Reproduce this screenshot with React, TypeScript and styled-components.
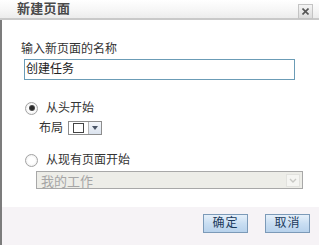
import React from 'react'
import styled, { createGlobalStyle } from 'styled-components'

const Global = createGlobalStyle`
  html, body {
    margin: 0;
    padding: 0;
    background: #fff;
  }
  body {
    font-family: "Liberation Sans", "Noto Sans CJK SC", sans-serif;
    font-size: 12px;
    color: #333;
  }
`

const Dialog = styled.div`
  width: 319px;
  height: 245px;
  display: flex;
  flex-direction: column;
  overflow: hidden;
`
const TitleBar = styled.div`
  height: 18px;
  flex: none;
  display: flex;
  align-items: center;
  justify-content: space-between;
  padding: 0 6px 0 17px;
  background: linear-gradient(#ffffff, #f6f6f6 55%, #ececec);
  border-bottom: 2px solid #c9c9c9;
`
const Title = styled.div`
  font-size: 13px;
  font-weight: bold;
  color: #4a4a4a;
  letter-spacing: 0.3px;
  line-height: 14px;
`
const Close = styled.div`
  width: 13px;
  height: 13px;
  margin-top: 4px;
  border: 1px solid #c4c4c4;
  background: linear-gradient(#f4f4f4, #dcdcdc);
  display: flex;
  align-items: center;
  justify-content: center;
`
const Body = styled.div`
  flex: 1;
  border-left: 2px solid #7c7c7c;
  padding: 22px 0 0 19px;
  display: flex;
  flex-direction: column;
  align-items: flex-start;
`
const Label = styled.div`
  line-height: 14px;
  color: #333;
`
const Input = styled.div`
  margin: 3px 0 0 3px;
  width: 268px;
  height: 19px;
  border: 1px solid #6b9cb6;
  line-height: 19px;
  padding-left: 1px;
  box-sizing: content-box;
  color: #222;
`
const RadioRow = styled.div<{ $top: number }>`
  margin-top: ${p => p.$top}px;
  margin-left: 4px;
  display: flex;
  align-items: center;
  height: 14px;
  line-height: 14px;
`
const Radio = styled.span<{ $on?: boolean }>`
  width: 11px;
  height: 11px;
  border-radius: 50%;
  border: 1px solid #a3a3a3;
  background: radial-gradient(circle, #ffffff 40%, #e6e6e6);
  margin-right: 8px;
  position: relative;
  &::after {
    content: '';
    display: ${p => (p.$on ? 'block' : 'none')};
    position: absolute;
    left: 2.5px;
    top: 2.5px;
    width: 6px;
    height: 6px;
    border-radius: 50%;
    background: radial-gradient(circle, #2a2a2a 35%, #777 100%);
  }
`
const SubRow = styled.div`
  margin: 6px 0 0 18px;
  display: flex;
  align-items: center;
  line-height: 14px;
`
const LayoutPick = styled.div`
  margin-left: 5px;
  display: flex;
  height: 12px;
  border: 1px solid #8d8d8d;
  background: #fff;
`
const LayoutIcon = styled.span`
  width: 19px;
  display: flex;
  align-items: center;
  justify-content: center;
  border-right: 1px solid #b5b5b5;
  &::before {
    content: '';
    width: 11px;
    height: 10px;
    border: 1px solid #444;
    box-sizing: border-box;
  }
`
const LayoutArrow = styled.span`
  width: 12px;
  display: flex;
  align-items: center;
  justify-content: center;
  background: linear-gradient(#f4f7fb, #dbe3ee);
  &::before {
    content: '';
    border-left: 3px solid transparent;
    border-right: 3px solid transparent;
    border-top: 4px solid #4a5566;
  }
`
const Select = styled.div`
  margin: 4px 0 0 15px;
  width: 259px;
  height: 16px;
  border: 1px solid #a8a8a8;
  background: #edede8;
  display: flex;
  align-items: center;
  justify-content: space-between;
  padding: 0 2px 0 4px;
  box-sizing: content-box;
  color: #a6a6a6;
  font-size: 13px;
`
const SelectArrow = styled.span`
  width: 14px;
  height: 13px;
  display: flex;
  align-items: center;
  justify-content: center;
  background: #f5f5f2;
  border: 1px solid #e2e2de;
  box-sizing: border-box;
`
const Footer = styled.div`
  height: 38px;
  flex: none;
  border-left: 2px solid #7c7c7c;
  background: #f6f3f6;
  display: flex;
  justify-content: flex-end;
  align-items: flex-start;
  gap: 17px;
  padding: 7px 9px 0 0;
  box-sizing: border-box;
`
const Button = styled.div`
  width: 43px;
  height: 17px;
  border: 1px solid #7c9ab8;
  background: linear-gradient(#e6f0fa, #c9def2 50%, #b8d2ec);
  color: #1b3a5c;
  font-size: 12px;
  line-height: 17px;
  text-align: center;
  letter-spacing: 1px;
`

const App = () => (
  <Dialog>
    <Global />
    <TitleBar>
      <Title>新建页面</Title>
      <Close>
        <svg width="7" height="7" viewBox="0 0 7 7">
          <path d="M0.5 0.5 L6.5 6.5 M6.5 0.5 L0.5 6.5" stroke="#555" strokeWidth="1.6" />
        </svg>
      </Close>
    </TitleBar>
    <Body>
      <Label>输入新页面的名称</Label>
      <Input>创建任务</Input>
      <RadioRow $top={21}>
        <Radio $on />
        从头开始
      </RadioRow>
      <SubRow>
        布局
        <LayoutPick>
          <LayoutIcon />
          <LayoutArrow />
        </LayoutPick>
      </SubRow>
      <RadioRow $top={18}>
        <Radio />
        从现有页面开始
      </RadioRow>
      <Select>
        我的工作
        <SelectArrow>
          <svg width="8" height="5" viewBox="0 0 8 5">
            <path d="M1 1 L4 4 L7 1" fill="none" stroke="#c8c8c4" strokeWidth="1.4" />
          </svg>
        </SelectArrow>
      </Select>
    </Body>
    <Footer>
      <Button>确定</Button>
      <Button>取消</Button>
    </Footer>
  </Dialog>
)

export default App
